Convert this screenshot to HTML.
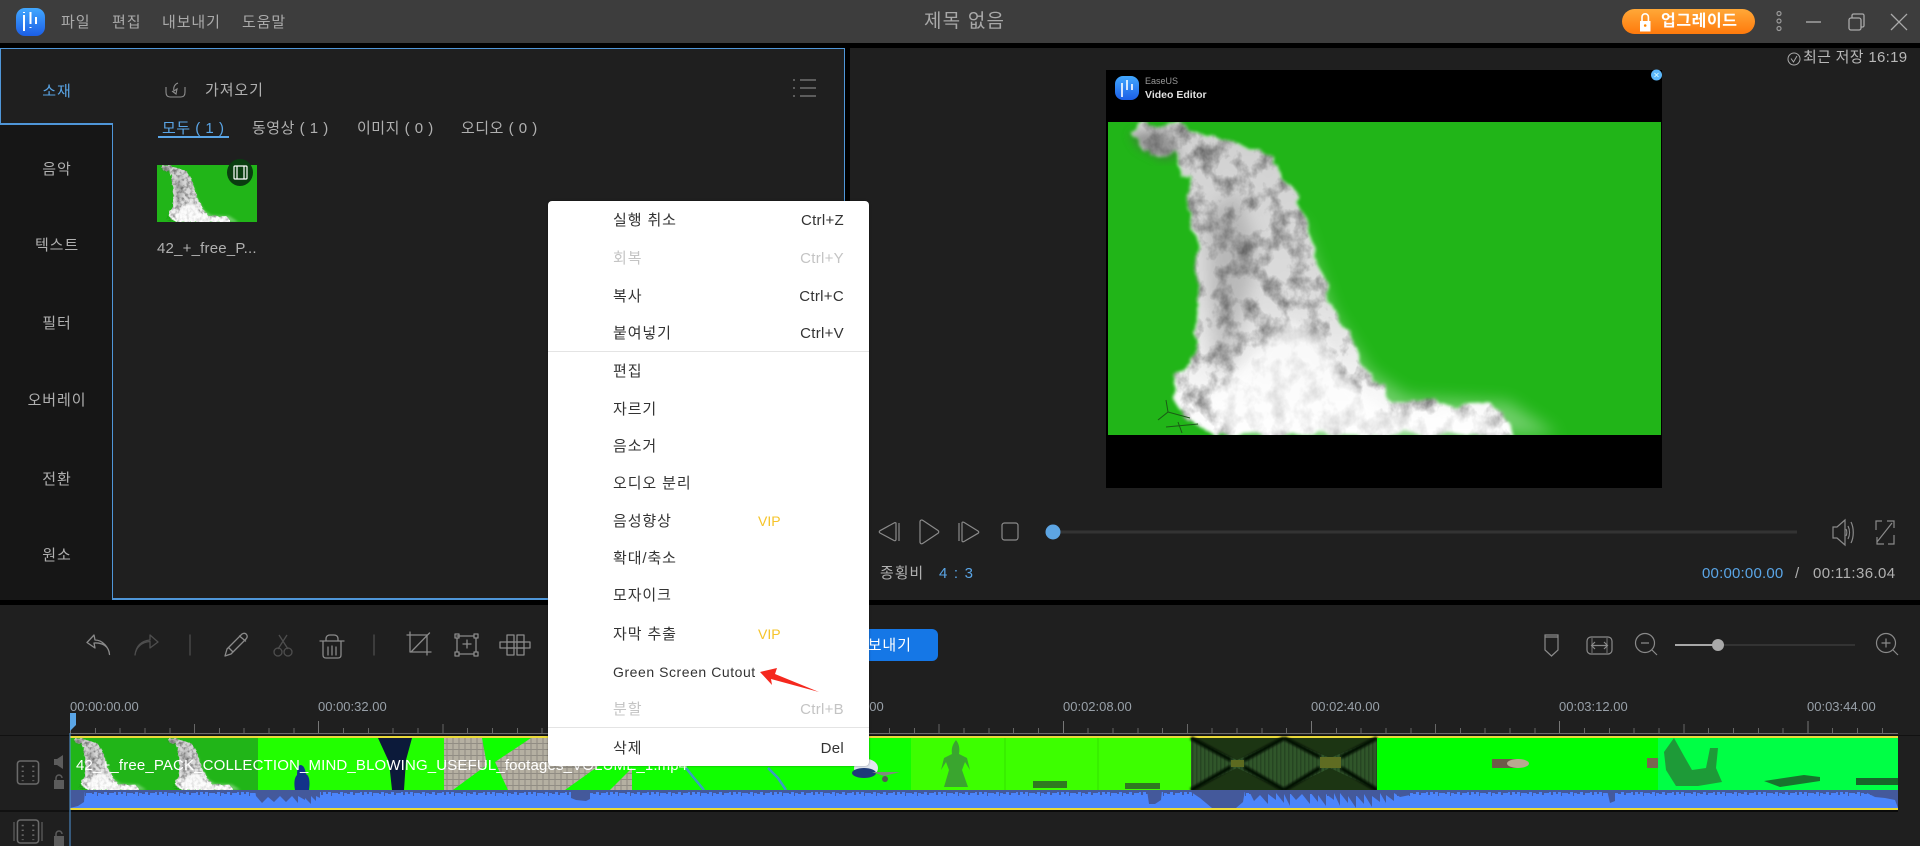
<!DOCTYPE html>
<html lang="ko"><head><meta charset="utf-8"><title>제목 없음</title>
<style>
html,body{margin:0;padding:0;background:#1f1f1f}
#p{position:relative;width:1920px;height:846px;overflow:hidden;background:#1f1f1f;font-family:"Liberation Sans","Noto Sans CJK KR",sans-serif;font-size:15px;letter-spacing:.9px;color:#b0b0b0}
.a{position:absolute}
.t{position:absolute;white-space:nowrap;line-height:20px;height:20px}
.c{transform:translateX(-50%)}
svg{position:absolute;left:0;top:0;overflow:visible;letter-spacing:0}
.m{position:absolute;white-space:nowrap;line-height:20px;font-size:15px;letter-spacing:.9px;color:#333}
.r{position:absolute;right:25px;white-space:nowrap;line-height:20px;font-size:15px;letter-spacing:.3px;color:#333}
.d{color:#c4c4c4}
.v{position:absolute;line-height:20px;font-size:14px;letter-spacing:0;color:#f6c42a}
.rl{font-size:13px;letter-spacing:0;color:#98a0a8}
.n{letter-spacing:.2px}
</style></head><body><div id="p">

<!-- title bar -->
<div class="a" style="left:0;top:0;width:1920px;height:43px;background:#3d3d3d"></div>
<div class="a" style="left:0;top:43px;width:1920px;height:5px;background:#000"></div>
<div class="a" style="left:0;top:600px;width:1920px;height:5px;background:#000"></div>
<div class="a" style="left:845px;top:48px;width:5px;height:552px;background:#000"></div>

<!-- sidebar -->
<div class="a" style="left:0;top:124px;width:112px;height:476px;background:#161616"></div>
<!-- blue frame -->
<div class="a" style="left:0;top:48px;width:845px;height:1px;background:#4f96d8"></div>
<div class="a" style="left:0;top:48px;width:1px;height:76px;background:#4f96d8"></div>
<div class="a" style="left:0;top:123px;width:113px;height:2px;background:#4f96d8"></div>
<div class="a" style="left:112px;top:124px;width:1px;height:475px;background:#4f96d8"></div>
<div class="a" style="left:112px;top:598px;width:733px;height:2px;background:#4f96d8"></div>
<div class="a" style="left:844px;top:48px;width:1px;height:552px;background:#4f96d8"></div>

<!-- title bar text -->
<span class="t" style="left:61px;top:13px;color:#aaa">파일</span>
<span class="t" style="left:112px;top:13px;color:#aaa">편집</span>
<span class="t" style="left:162px;top:13px;color:#aaa">내보내기</span>
<span class="t" style="left:242px;top:13px;color:#aaa">도움말</span>
<span class="t" style="left:924px;top:12px;font-size:19px;letter-spacing:1.200px;color:#a8a8a8">제목 없음</span>
<div class="a" style="left:1622px;top:9px;width:133px;height:25px;border-radius:13px;background:linear-gradient(#ffa838,#ff7a0c)"></div>
<span class="t" style="left:1661px;top:12px;font-size:16px;letter-spacing:.6px;font-weight:bold;color:#fff">업그레이드</span>
<span class="t" style="left:1803px;top:48px;font-size:15px;letter-spacing:.3px;color:#b8b8b8">최근 저장 16:19</span>

<!-- sidebar labels -->
<span class="t c" style="left:57px;top:82px;color:#5aa5e6">소재</span>
<span class="t c" style="left:57px;top:160px">음악</span>
<span class="t c" style="left:57px;top:236px">텍스트</span>
<span class="t c" style="left:57px;top:314px">필터</span>
<span class="t c" style="left:57px;top:391px">오버레이</span>
<span class="t c" style="left:57px;top:470px">전환</span>
<span class="t c" style="left:57px;top:546px">원소</span>

<!-- media panel -->
<span class="t" style="left:205px;top:81px">가져오기</span>
<span class="t" style="left:162px;top:119px;color:#5aa5e6;letter-spacing:.5px">모두 ( 1 )</span>
<div class="a" style="left:158px;top:136px;width:71px;height:2px;background:#5aa5e6"></div>
<span class="t" style="left:252px;top:119px;letter-spacing:.5px">동영상 ( 1 )</span>
<span class="t" style="left:357px;top:119px;letter-spacing:.5px">이미지 ( 0 )</span>
<span class="t" style="left:461px;top:119px;letter-spacing:.5px">오디오 ( 0 )</span>
<span class="t" style="left:157px;top:239px;font-size:15px;letter-spacing:.2px;color:#b0b0b0">42_+_free_P...</span>

<!-- player labels -->
<span class="t" style="left:880px;top:564px">종횡비</span>
<span class="t" style="left:939px;top:564px;color:#5aa5e6;font-size:15px;letter-spacing:1.200px">4 : 3</span>
<span class="t n" style="left:1702px;top:564px;color:#5aa5e6;font-size:15px">00:00:00.00</span>
<span class="t n" style="left:1795px;top:564px;font-size:15px;color:#b0b0b0">/</span>
<span class="t n" style="left:1813px;top:564px;font-size:15px;color:#b0b0b0;letter-spacing:.4px">00:11:36.04</span>

<!-- export -->
<div class="a" style="left:800px;top:629px;width:138px;height:32px;border-radius:6px;background:#1577e6"></div>
<span class="t" style="left:853px;top:636px;color:#fff">내보내기</span>

<!-- ruler -->
<div class="a" style="left:70px;top:733px;width:1828px;height:1px;background:#6c6c6c"></div>
<div class="a" style="left:70px;top:728px;width:1828px;height:5px;background:repeating-linear-gradient(90deg,#666 0 1px,transparent 1px 24.82px)"></div>
<div class="a" style="left:70px;top:724px;width:1828px;height:9px;background:repeating-linear-gradient(90deg,#666 0 1px,transparent 1px 124.1px)"></div>
<div class="a" style="left:70px;top:721px;width:1828px;height:12px;background:repeating-linear-gradient(90deg,#777 0 1px,transparent 1px 248.2px)"></div>
<span class="t rl" style="left:70px;top:697px">00:00:00.00</span>
<span class="t rl" style="left:318px;top:697px">00:00:32.00</span>
<span class="t rl" style="left:815px;top:697px">00:01:36.00</span>
<span class="t rl" style="left:1063px;top:697px">00:02:08.00</span>
<span class="t rl" style="left:1311px;top:697px">00:02:40.00</span>
<span class="t rl" style="left:1559px;top:697px">00:03:12.00</span>
<span class="t rl" style="left:1807px;top:697px">00:03:44.00</span>

<div class="a" style="left:0;top:735px;width:1920px;height:1px;background:#111"></div>
<div class="a" style="left:0;top:810px;width:70px;height:2px;background:#111"></div>
<div class="a" style="left:70px;top:810px;width:1828px;height:2px;background:#0a0a0a"></div>

<!-- main svg -->
<svg width="1920" height="846" viewBox="0 0 1920 846" xmlns="http://www.w3.org/2000/svg">
<defs>
<linearGradient id="wg" x1="0" y1="0" x2="0" y2="1"><stop offset="0" stop-color="#d0d0d0"/><stop offset=".55" stop-color="#dcdcdc"/><stop offset=".85" stop-color="#f6f6f6"/><stop offset="1" stop-color="#fff"/></linearGradient>
<linearGradient id="lg" x1="0" y1="0" x2="0" y2="1"><stop offset="0" stop-color="#42a8ff"/><stop offset="1" stop-color="#1c5ee6"/></linearGradient>
<filter id="cloud" x="-8%" y="-8%" width="116%" height="116%" color-interpolation-filters="sRGB">
<feTurbulence type="fractalNoise" baseFrequency=".045" numOctaves="3" seed="3" result="d"/>
<feDisplacementMap in="SourceGraphic" in2="d" scale="18" xChannelSelector="R" yChannelSelector="G" result="dm"/>
<feGaussianBlur in="dm" stdDeviation="1.600" result="s"/>
<feTurbulence type="fractalNoise" baseFrequency=".055 .045" numOctaves="4" seed="8" result="n"/>
<feColorMatrix in="n" type="matrix" values="1.100 0 0 0 .36 1.100 0 0 0 .36 1.100 0 0 0 .36 0 0 0 0 1" result="g"/>
<feBlend in="g" in2="s" mode="multiply" result="m"/>
<feComposite in="m" in2="s" operator="in"/>
</filter>
<filter id="b8" x="-20%" y="-20%" width="140%" height="140%"><feGaussianBlur stdDeviation="8"/></filter>
<filter id="b4" x="-20%" y="-20%" width="140%" height="140%"><feGaussianBlur stdDeviation="5"/></filter>
<filter id="b1" x="-10%" y="-10%" width="120%" height="120%"><feGaussianBlur stdDeviation="1"/></filter>
<pattern id="wv" x="70" y="790" width="41" height="18" patternUnits="userSpaceOnUse"><path fill="#44599b" d="M0 0V3H3V2H5V5H7V2H10V4H12V2H15V6H16V3H20V3H22V4H24V2H27V6H28V3H31V4H34V2H37V5H39V3H41V0Z"/></pattern>
<pattern id="br" width="12" height="6" patternUnits="userSpaceOnUse"><rect width="12" height="6" fill="#b5b0a2"/><path d="M0 5.500H12M3 0V5M9 0V5" stroke="#85817a" stroke-width=".8" fill="none"/></pattern>
<pattern id="st" width="4" height="4" patternUnits="userSpaceOnUse"><rect width="4" height="4" fill="#30562a"/><rect width="1.500" height="4" fill="#264522"/></pattern>
<symbol id="wf" viewBox="0 0 553 313" preserveAspectRatio="none">
<rect width="553" height="313" fill="#21b518"/>
<path filter="url(#b8)" fill="#fff" opacity=".35" d="M190 90L225 190L262 250L300 275L400 280L450 313H200Z"/>
<path fill="url(#wg)" filter="url(#cloud)" d="M20 6L32 1L68 1L97 13L135 24L162 38L185 64L189 84L202 114L212 154L227 194L242 214L258 248L284 278L326 284L384 281L403 304L407 313L108 313L70 284L66 254L89 228L89 138L78 61L70 34L55 39L28 26Z"/>
<path fill="#fff" opacity=".7" filter="url(#b4)" d="M100 280L135 245L180 200L212 212L235 255L275 290L375 292L395 313H120Z"/>
<path fill="#555" opacity=".5" filter="url(#b4)" d="M22 12L60 8L72 34L55 38L30 25Z"/>
<path fill="#555" opacity=".25" filter="url(#b8)" d="M100 90L130 70L150 130L125 240L105 250Z"/>
<path fill="none" stroke="#1b5a16" stroke-width="1" d="M58 278L60 290L50 298M60 290L82 296M70 300L74 311M58 305L90 302"/>
</symbol>
<symbol id="film" viewBox="0 0 24 26"><rect x="1" y="1" width="22" height="24" rx="3" fill="none" stroke="#6a6a6a" stroke-width="1.600"/><path d="M6.500 6v1.500M6.500 11v1.500M6.500 16v1.500M6.500 21v1M17.500 6v1.500M17.500 11v1.500M17.500 16v1.500M17.500 21v1" stroke="#6a6a6a" stroke-width="2.200"/></symbol>
</defs>

<!-- logos and title controls -->
<rect x="16" y="8" width="29" height="28" rx="9" fill="url(#lg)"/>
<path d="M24 15v16M30.500 12v12M36 17v7" stroke="#fff" stroke-width="2"/><path d="M24 12v1M30.500 27v1" stroke="#fff" stroke-width="2"/>
<path fill="#fff" d="M1640 21h10.500v10.500h-10.500z"/><path fill="none" stroke="#fff" stroke-width="1.600" d="M1642 21v-4a3.200 3.200 0 0 1 6.400 0v4"/><circle cx="1645.200" cy="25.500" r="1.300" fill="#f80"/>
<g fill="none" stroke="#9a9a9a" stroke-width="1.200"><circle cx="1779" cy="13.500" r="2"/><circle cx="1779" cy="21" r="2"/><circle cx="1779" cy="28.500" r="2"/></g>
<path d="M1806 22h15" stroke="#aaa" stroke-width="1.400"/>
<g fill="none" stroke="#aaa" stroke-width="1.300"><rect x="1849" y="18" width="12" height="12" rx="2"/><path d="M1852 18v-2.500a1.500 1.500 0 0 1 1.500-1.500h9a1.500 1.500 0 0 1 1.500 1.500v10a1.500 1.500 0 0 1-1.500 1.500h-1.500"/><path d="M1891 14l16 16M1907 14l-16 16"/></g>
<g fill="none" stroke="#aaa" stroke-width="1"><ellipse cx="1794" cy="59" rx="6" ry="6"/><path d="M1791 58.500l2.500 3.500 3.500-6"/></g>

<!-- import and list -->
<g fill="none" stroke="#8f8f8f" stroke-width="1.100"><path d="M166 87v5c0 3 1 5 4 5h11c3 0 4-2 4-5v-5"/><path d="M178 83c-3 1-5 4-4 8l3-2-1 5c-1-1-3-2-4-3"/></g>
<path d="M793 80h2M800 80h16M793 88h2M800 88h16M793 96h2M800 96h16" stroke="#9a9a9a" stroke-width="1.100"/>

<!-- thumbnail -->
<use href="#wf" x="157" y="165" width="100" height="57"/>
<ellipse cx="240" cy="172.500" rx="13" ry="13.500" fill="#0a3d10"/>
<g fill="none" stroke="#fff" stroke-width="1.200"><rect x="234" y="166" width="13" height="13" rx="1"/><path d="M237 166v13M244 166v13"/></g>

<!-- preview -->
<rect x="1106" y="70" width="556" height="418" fill="#000"/>
<use href="#wf" x="1108" y="122" width="553" height="313"/>
<rect x="1115" y="76" width="24" height="24" rx="8" fill="url(#lg)"/>
<path d="M1122 83v14M1127 80v10M1132 84v6" stroke="#fff" stroke-width="1.600"/>
<text x="1145" y="84" font-size="9" fill="#999" font-family="Liberation Sans">EaseUS</text>
<text x="1145" y="98" font-size="10.500" font-weight="bold" fill="#e0e0e0" font-family="Liberation Sans">Video Editor</text>
<circle cx="1656.500" cy="75" r="5.500" fill="#5cb8fb"/><path d="M1654.500 73l4 4M1658.500 73l-4 4" stroke="#dff" stroke-width=".8"/>

<!-- player controls -->
<g fill="none" stroke="#8a8a8a" stroke-width="1.200" stroke-linejoin="round">
<path d="M896 523v16.500c0 1-1 1.500-2 1L880 533c-1-.7-1-1.700 0-2.300L894 523c1-.6 2-.3 2 0zM899 523v18"/>
<path d="M920 522c0-2 1.500-2.500 3-1.500l15 10c1 .8 1 2 0 2.800l-15 10c-1.500 1-3 .5-3-1.500z"/>
<path d="M959 523v18M962 523c0-1 1-1.200 2-.6l14 8.600c1 .7 1 1.700 0 2.300l-14 8.200c-1 .6-2 .2-2-.8z"/>
<rect x="1002" y="523" width="16" height="17" rx="2.500"/>
</g>
<rect x="1053" y="530.500" width="744" height="3" fill="#333"/>
<circle cx="1053" cy="532" r="7.500" fill="#5da5e3"/>
<g fill="none" stroke="#8a8a8a" stroke-width="1.200">
<path d="M1833 527h4l8-7v25l-8-7h-4z"/><path d="M1848 526c2 4 2 9 0 13M1851 522c3 6 3 15 0 21M1846 529c1 2 1 5 0 7"/>
<path d="M1876 530v-9h6M1894 535v9h-6M1892 523l-15 19M1887 521h7v7M1877 537v7h7"/>
</g>

<!-- toolbar icons -->
<g fill="none" stroke="#8a8a8a" stroke-width="1.300" stroke-linejoin="round" stroke-linecap="round">
<path d="M94 635l-7 7.500 8 5.500-1-5c8-.5 15 3 15.500 11.500C109 648 103 640 95 640z"/>
<path d="M190 635v20" stroke="#4d4d4d"/>
<path d="M227 649l15-15c1.500-1 3.500-1 4.500.5s1 3-.5 4.500l-15 15-6 2zM239.500 636l6 5M229 648l4 4"/>
<path d="M320 641h24M326 641v-2c0-3 2-4 4-4h4c2 0 4 1 4 4v2M323 641v14c0 2 1 3 3 3h12c2 0 3-1 3-3v-14M328 647v8M332 646v9M336 647v8"/>
<path d="M374 635v20" stroke="#4d4d4d"/>
<path d="M407 635H427V655M410 632V652H431M429.500 633L411 652"/>
<path d="M457 636h17M459 654h15M457 638v14M476 638v14"/><rect x="455" y="634" width="4" height="4"/><rect x="474" y="634" width="4" height="4"/><rect x="455" y="652" width="4" height="4"/><rect x="474" y="652" width="4" height="4"/>
<path d="M467 640v8M463 644h8"/>
<rect x="507" y="635" width="7" height="7"/><rect x="517" y="635" width="7" height="7"/><rect x="507" y="648" width="7" height="7"/><rect x="517" y="648" width="7" height="7"/>
<rect x="500" y="642" width="30" height="6"/><path d="M507 642v6M514 642v6M517 642v6M524 642v6"/>
</g>
<path fill="none" stroke="#4e4e4e" stroke-width="1.300" stroke-linejoin="round" d="M135 655c1-8 7-13 15-13.500V648l8-6-8-7v5c-10 1-14 7-15 15z"/>
<g fill="none" stroke="#4e4e4e" stroke-width="1.300"><path d="M279 635l9 14M287 635l-9 14"/><circle cx="278" cy="652" r="4"/><circle cx="288" cy="652" r="4"/></g>

<!-- right tool icons -->
<g fill="none" stroke="#8a8a8a" stroke-width="1.200">
<path d="M1545 635h13v15l-6.500 6-6.500-6zM1545 637h13"/>
<rect x="1587" y="637" width="25" height="17" rx="4"/><path d="M1592 645.500h15M1595 642l-3.500 3.500 3.500 3.500M1604 642l3.500 3.500-3.500 3.500"/>
<path d="M1592 638v15M1607 638v15" stroke-width=".8"/>
<circle cx="1645" cy="643" r="9.500"/><path d="M1641 643h8M1652 650l5 5"/>
<circle cx="1886" cy="643" r="9.500"/><path d="M1881.500 643h9M1886 638.500v9M1893 650l5 5"/>
</g>
<rect x="1675" y="644" width="180" height="2" fill="#333"/><rect x="1675" y="644" width="43" height="2" fill="#a8a8a8"/><ellipse cx="1718" cy="645" rx="6" ry="6" fill="#a8a8a8"/>

<!-- timeline clips -->
<rect x="70" y="736" width="1828" height="2" fill="#ead93a"/>
<use href="#wf" x="70" y="738" width="94" height="52"/>
<use href="#wf" x="164" y="738" width="94" height="52"/>
<rect x="258" y="738" width="186" height="52" fill="#22ff00"/>
<path fill="#12338a" d="M300 765c4 0 5 4 6 9 4 2 4 10 3 16h-14c-1-6-1-12 2-15 0-5 1-9 3-10z"/>
<path fill="#0c1a3a" d="M378 738L412 738L406 760L404 790L392 790L389 762Z"/>
<rect x="444" y="738" width="188" height="52" fill="#0fff00"/>
<path fill="url(#br)" d="M444 738L482 738L487 765L453 790L444 790Z"/>
<path fill="url(#br)" d="M495 762L531 738L575 738L600 765L565 790L508 790Z"/>
<path fill="#0fff00" d="M487 765L506 790H453Z"/>
<path fill="url(#br)" d="M610 790L632 768V790Z"/>
<rect x="632" y="738" width="279" height="52" fill="#10ff00"/>
<path d="M686 768l8 10 10 12M768 768l10 10 8 12" stroke="#3a9ec0" stroke-width="2.500" fill="none"/>
<ellipse cx="866" cy="768" rx="12" ry="9" fill="#e0e6f0"/><ellipse cx="864" cy="773" rx="12" ry="5" fill="#1e3a78"/><path d="M872 772L900 772L884 776Z" fill="#7f8a7f"/><circle cx="885" cy="779" r="3" fill="#555"/>
<rect x="911" y="738" width="280" height="52" fill="#3dff00"/>
<path fill="#3aa52f" d="M956 740c3 4 4 8 3 14l8 4 3 12-5-8-3 8 6 17h-24l5-17-3-8-5 8 3-12 8-4c-1-6 1-10 4-14z"/>
<rect x="1033" y="781" width="34" height="7" fill="#2f7a20"/><rect x="1125" y="783" width="35" height="6" fill="#2f7a20"/>
<path d="M1005 738v52M1098 738v52" stroke="#34e000" stroke-width="1"/>
<rect x="1191" y="738" width="186" height="52" fill="url(#st)"/>
<path d="M1191 738H1284L1237 760ZM1191 790H1284L1237 768ZM1284 738H1377L1330 758ZM1284 790H1377L1330 768Z" fill="#1c3513"/>
<path filter="url(#b1)" d="M1191 738L1231 760M1284 738L1244 760M1191 790L1231 767M1284 790L1244 767M1284 738L1320 757M1377 738L1341 757M1284 790L1320 768M1377 790L1341 768" stroke="#060c04" stroke-width="4" fill="none"/>
<rect x="1231" y="760" width="13" height="7" fill="#5c6a20"/><rect x="1320" y="757" width="21" height="11" fill="#5f6c22"/>
<rect x="1377" y="738" width="281" height="52" fill="#00ff00"/>
<rect x="1492" y="759" width="24" height="9" fill="#6e5a48"/><ellipse cx="1518" cy="763.500" rx="11" ry="4.500" fill="#b8a890"/>
<rect x="1647" y="758" width="11" height="10" fill="#7a6650"/>
<rect x="1658" y="738" width="240" height="52" fill="#00ff45"/>
<path fill="#1e9a38" d="M1664 752l10-14 10 18 8 14 14-2 4-20h8l-2 20 6 14-24 4-22 0-10-16z"/>
<path fill="#17752d" d="M1764 781l40-6 16 2v4l-40 6z"/><rect x="1856" y="778" width="42" height="7" fill="#17652a"/>

<!-- audio -->
<rect x="70" y="790" width="1828" height="18" fill="#4b85fb"/>
<rect x="70" y="790" width="1828" height="18" fill="url(#wv)"/>
<path fill="#44599b" d="M70 790H85L84 802L78 806L70 808ZM255 790H320V798L316 796V801L311 796V804L305 798V800L298 796V803L292 796L286 802L280 796L274 802L268 797L262 803L256 796ZM571 790H590V799L586 801L576 800L571 798ZM1147 790H1162L1161 800L1155 804L1149 804ZM1188 790H1245L1243 802L1236 808H1212L1200 798ZM1245 790H1410V795L1400 797L1394 793V801L1386 795V803L1380 793V802L1372 796V807L1364 794V804L1356 795V808L1348 796V803L1340 793V806L1334 793V800L1326 794V806L1318 795V802L1310 792V804L1302 794L1296 800L1290 793V806L1284 794V803L1276 793V800L1268 794V804L1260 795L1254 801L1250 793ZM1607 790H1615V801L1610 803ZM1860 790H1898V808L1895 800L1885 798L1875 797L1865 792Z"/>
<rect x="70" y="808" width="1828" height="2" fill="#ead93a"/>

<!-- track headers -->
<use href="#film" x="16" y="760" width="24" height="25"/>
<use href="#film" x="16" y="819" width="24" height="25"/>
<path d="M14 822v19M42 822v19" stroke="#5c5c5c" stroke-width="1.300"/>
<path fill="#5c5c5c" d="M54 759h3l6-4v14l-6-4h-3z"/>
<path fill="#5c5c5c" d="M54 780h10v9h-10zM54 836h10v10h-10z"/><path fill="none" stroke="#5c5c5c" stroke-width="1.500" d="M56 780v-2a3 3 0 0 1 6 0M56 836v-2a3 3 0 0 1 6 0"/>

<!-- playhead -->
<path d="M70 733V846" stroke="#4f96d8" stroke-width="1"/>
<path d="M70 713H76V725L70 731Z" fill="#5aa5e6"/>
</svg>

<span class="t" style="left:76px;top:756px;font-size:15px;color:#fff;letter-spacing:.15px">42_+_free_PACK_COLLECTION_MIND_BLOWING_USEFUL_footages_VOLUME_1.mp4</span>

<!-- context menu -->
<div class="a" style="left:548px;top:201px;width:321px;height:565px;background:#fff;border-radius:4px;box-shadow:0 0 2px rgba(0,0,0,.4)">
<div class="m" style="left:65px;top:10px">실행 취소</div><div class="r" style="top:10px">Ctrl+Z</div>
<div class="m d" style="left:65px;top:48px">회복</div><div class="r d" style="top:48px">Ctrl+Y</div>
<div class="m" style="left:65px;top:86px">복사</div><div class="r" style="top:86px">Ctrl+C</div>
<div class="m" style="left:65px;top:123px">붙여넣기</div><div class="r" style="top:123px">Ctrl+V</div>
<div class="a" style="left:0;top:150px;width:321px;height:1px;background:#e4e4e4"></div>
<div class="m" style="left:65px;top:161px">편집</div>
<div class="m" style="left:65px;top:199px">자르기</div>
<div class="m" style="left:65px;top:236px">음소거</div>
<div class="m" style="left:65px;top:273px">오디오 분리</div>
<div class="m" style="left:65px;top:311px">음성향상</div><div class="v" style="top:310px;left:210px">VIP</div>
<div class="m" style="left:65px;top:348px">확대/축소</div>
<div class="m" style="left:65px;top:385px">모자이크</div>
<div class="m" style="left:65px;top:424px">자막 추출</div><div class="v" style="top:423px;left:210px">VIP</div>
<div class="m" style="left:65px;top:461px;font-size:14px;letter-spacing:.55px">Green Screen Cutout</div>
<div class="m d" style="left:65px;top:499px">분할</div><div class="r d" style="top:499px">Ctrl+B</div>
<div class="a" style="left:0;top:526px;width:321px;height:1px;background:#e4e4e4"></div>
<div class="m" style="left:65px;top:538px">삭제</div><div class="r" style="top:538px">Del</div>
</div>
<svg width="1920" height="846" viewBox="0 0 1920 846"><path fill="#f5281e" d="M760 672L777 668L775 674L819 692L771 679L772 685Z"/></svg>
</div></body></html>
